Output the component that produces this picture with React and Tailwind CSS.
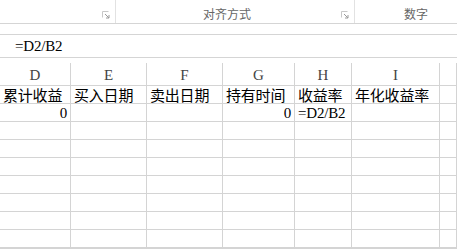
import React from "react";

const Launcher = () => (
  <svg width="8" height="8" viewBox="0 0 8 8" className="block">
    <path d="M0.5 6.5V0.5H6.5" fill="none" stroke="#c8c8c8" strokeWidth="1" />
    <path d="M3 3L7 7M7 4V7H4" fill="none" stroke="#9a9a9a" strokeWidth="1" />
  </svg>
);

const cjk = { fontFamily: '"Noto Sans CJK SC", "Noto Sans", sans-serif' };
const serif = { fontFamily: '"Liberation Serif", "Noto Sans CJK SC", serif' };

const cols = ["D", "E", "F", "G", "H", "I", ""];
const headers = ["累计收益", "买入日期", "卖出日期", "持有时间", "收益率", "年化收益率", ""];
const data = [
  { t: "0", r: true },
  { t: "" },
  { t: "" },
  { t: "0", r: true },
  { t: "=D2/B2" },
  { t: "" },
  { t: "" },
];

const gridCols = "grid grid-cols-[71px_76px_76px_72px_57px_88px_1fr]";

export default function App() {
  return (
    <div className="w-[457px] h-[249px] bg-white overflow-hidden flex flex-col">
      {/* Ribbon */}
      <div className="h-[24px] shrink-0 flex border-b border-[#d5d5d5]">
        <div className="w-[116px] h-[23px] border-r border-[#e2e2e2] flex items-center justify-end pr-[5px] pt-[7px]">
          <Launcher />
        </div>
        <div className="w-[239px] h-[23px] border-r border-[#e2e2e2] flex items-center pl-[87px] pt-[4px]">
          <span className="text-[12px] text-[#666] leading-none" style={cjk}>对齐方式</span>
          <span className="ml-auto mr-[5px] pt-[3px]"><Launcher /></span>
        </div>
        <div className="flex-1 h-[23px] flex items-center pl-[49px] pt-[4px]">
          <span className="text-[12px] text-[#666] leading-none" style={cjk}>数字</span>
        </div>
      </div>
      <div className="h-[10px] shrink-0" />
      {/* Formula bar */}
      <div className="h-[24px] shrink-0 border-y border-[#d5d5d5] flex items-center pl-[15px]">
        <span className="text-[15px] tracking-[-0.2px] text-black leading-none pt-[1px]" style={serif}>=D2/B2</span>
      </div>
      <div className="h-[5px] shrink-0" />
      {/* Column headers */}
      <div className={`${gridCols} h-[23px] shrink-0`}>
        {cols.map((c, i) => (
          <div key={i} className="border-r border-b border-[#d4d4d4] flex items-end justify-center pb-[2px]">
            <span className="text-[15px] text-[#444] leading-none" style={serif}>{c}</span>
          </div>
        ))}
      </div>
      {/* Row 1 headers */}
      <div className={`${gridCols} h-[18px] shrink-0`}>
        {headers.map((h, i) => (
          <div key={i} className="border-r border-b border-[#d4d4d4] flex items-end pl-[3px] overflow-visible whitespace-nowrap">
            <span className="text-[15px] text-black leading-[17px] tracking-[-0.2px]" style={cjk}>{h}</span>
          </div>
        ))}
      </div>
      {/* Row 2 data */}
      <div className={`${gridCols} h-[18px] shrink-0`}>
        {data.map((d, i) => (
          <div
            key={i}
            className={`border-r border-b border-[#d4d4d4] flex items-end whitespace-nowrap ${d.r ? "justify-end pr-[3px]" : "pl-[3px]"}`}
          >
            <span className="text-[15px] tracking-[-0.2px] text-black leading-[16px]" style={serif}>{d.t}</span>
          </div>
        ))}
      </div>
      {/* Empty rows */}
      {Array.from({ length: 7 }).map((_, r) => (
        <div key={r} className={`${gridCols} h-[18px] shrink-0`}>
          {cols.map((_, i) => (
            <div key={i} className="border-r border-b border-[#d4d4d4]" />
          ))}
        </div>
      ))}
      <div className="flex-1 bg-[#d4d4d4]" />
    </div>
  );
}
